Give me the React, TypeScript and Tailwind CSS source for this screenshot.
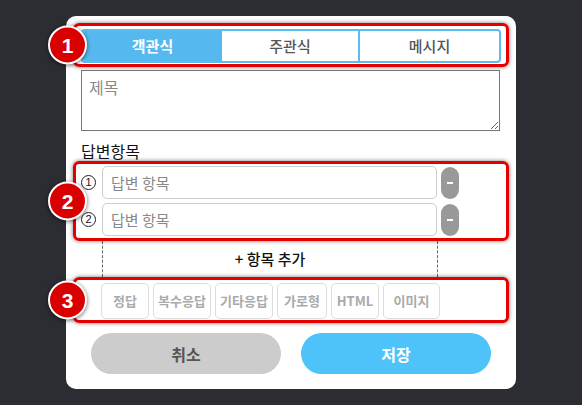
import React from "react";

const font = { fontFamily: '"Noto Sans CJK KR", "Noto Sans", sans-serif' };

function Badge({ n }: { n: number }) {
  return (
    <div className="absolute left-[-28px] top-1/2 -translate-y-1/2 w-[39px] h-[39px] rounded-full bg-[#d90000] border-[2px] border-white shadow-[0_1px_4px_rgba(0,0,0,0.6)] flex items-center justify-center">
      <span className="text-white text-[21px] font-bold leading-none font-['Liberation_Sans',sans-serif]">{n}</span>
    </div>
  );
}

const chips = [
  { label: "정답", w: "w-[48px]" },
  { label: "복수응답", w: "w-[58px]" },
  { label: "기타응답", w: "w-[58px]" },
  { label: "가로형", w: "w-[50px]" },
  { label: "HTML", w: "w-[48px]" },
  { label: "이미지", w: "w-[57px]" },
];

export default function App() {
  return (
    <div className="w-[582px] h-[405px] bg-[#2b2d33] pt-[16px] pl-[66px]" style={font}>
      <div className="w-[450px] h-[373px] bg-white rounded-[10px] pt-[7px] px-[7px]">
        {/* tabs */}
        <div className="relative h-[44px] border-[3px] border-[#e50000] rounded-[6px] shadow-[0_0_4px_rgba(0,0,0,0.55)] px-[5px] pt-[3px]">
          <Badge n={1} />
          <div className="flex h-[34px] border-2 border-[#5bbcf0] rounded-[4px] overflow-hidden">
            <div className="w-[139px] bg-[#55b9ef] flex items-center justify-center text-white text-[15px] font-bold">객관식</div>
            <div className="w-[138px] border-r-2 border-[#5bbcf0] flex items-center justify-center text-[#555] text-[15px] font-medium">주관식</div>
            <div className="flex-1 flex items-center justify-center text-[#555] text-[15px] font-medium">메시지</div>
          </div>
        </div>

        <textarea
          placeholder="제목"
          className="block mt-[3px] ml-[8px] w-[419px] h-[61px] border border-[#777] px-[7px] pt-[4px] text-[16px] placeholder:text-[#888] outline-none"
        />

        <div className="mt-[10px] ml-[8px] text-[16px] leading-[20px] text-[#111]">답변항목</div>

        {/* answer rows */}
        <div className="relative h-[80px] border-[3px] border-[#e50000] rounded-[6px] shadow-[0_0_4px_rgba(0,0,0,0.55)] pl-[5px] pt-[2px] flex flex-col gap-[4px]">
          <Badge n={2} />
          {[1, 2].map((n) => (
            <div key={n} className="flex items-center h-[33px]">
              <span className="w-[15px] h-[15px] rounded-full border border-[#222] flex items-center justify-center text-[11px] leading-none text-[#111] font-['Liberation_Sans',sans-serif]">
                {n}
              </span>
              <input
                placeholder="답변 항목"
                className="ml-[6px] w-[335px] h-[33px] border border-[#ccc] rounded-[5px] px-[8px] text-[15px] placeholder:text-[#888] outline-none"
              />
              <div className="ml-[4px] w-[18px] h-[32px] rounded-full bg-[#999] flex items-center justify-center">
                <span className="w-[6px] h-[2px] bg-white" />
              </div>
            </div>
          ))}
        </div>

        <div className="ml-[29px] w-[336px] h-[36px] border-x border-dashed border-[#666] flex items-center justify-center text-[15px] font-medium text-[#111]">
          + 항목 추가
        </div>

        {/* options */}
        <div className="relative h-[46px] border-[3px] border-[#e50000] rounded-[6px] shadow-[0_0_4px_rgba(0,0,0,0.55)] pl-[25px] pt-[3px] flex gap-[4px]">
          <Badge n={3} />
          {chips.map((c) => (
            <div
              key={c.label}
              className={`${c.w} h-[36px] border border-[#ddd] rounded-[5px] flex items-center justify-center text-[13px] font-bold text-[#aaa]`}
            >
              {c.label}
            </div>
          ))}
        </div>

        <div className="mt-[10px] pl-[18px] flex gap-[20px]">
          <button className="w-[190px] h-[41px] rounded-full bg-[#cccccc] text-[#555] text-[16px] font-bold">취소</button>
          <button className="w-[190px] h-[41px] rounded-full bg-[#4dc3f9] text-white text-[16px] font-bold">저장</button>
        </div>
      </div>
    </div>
  );
}
